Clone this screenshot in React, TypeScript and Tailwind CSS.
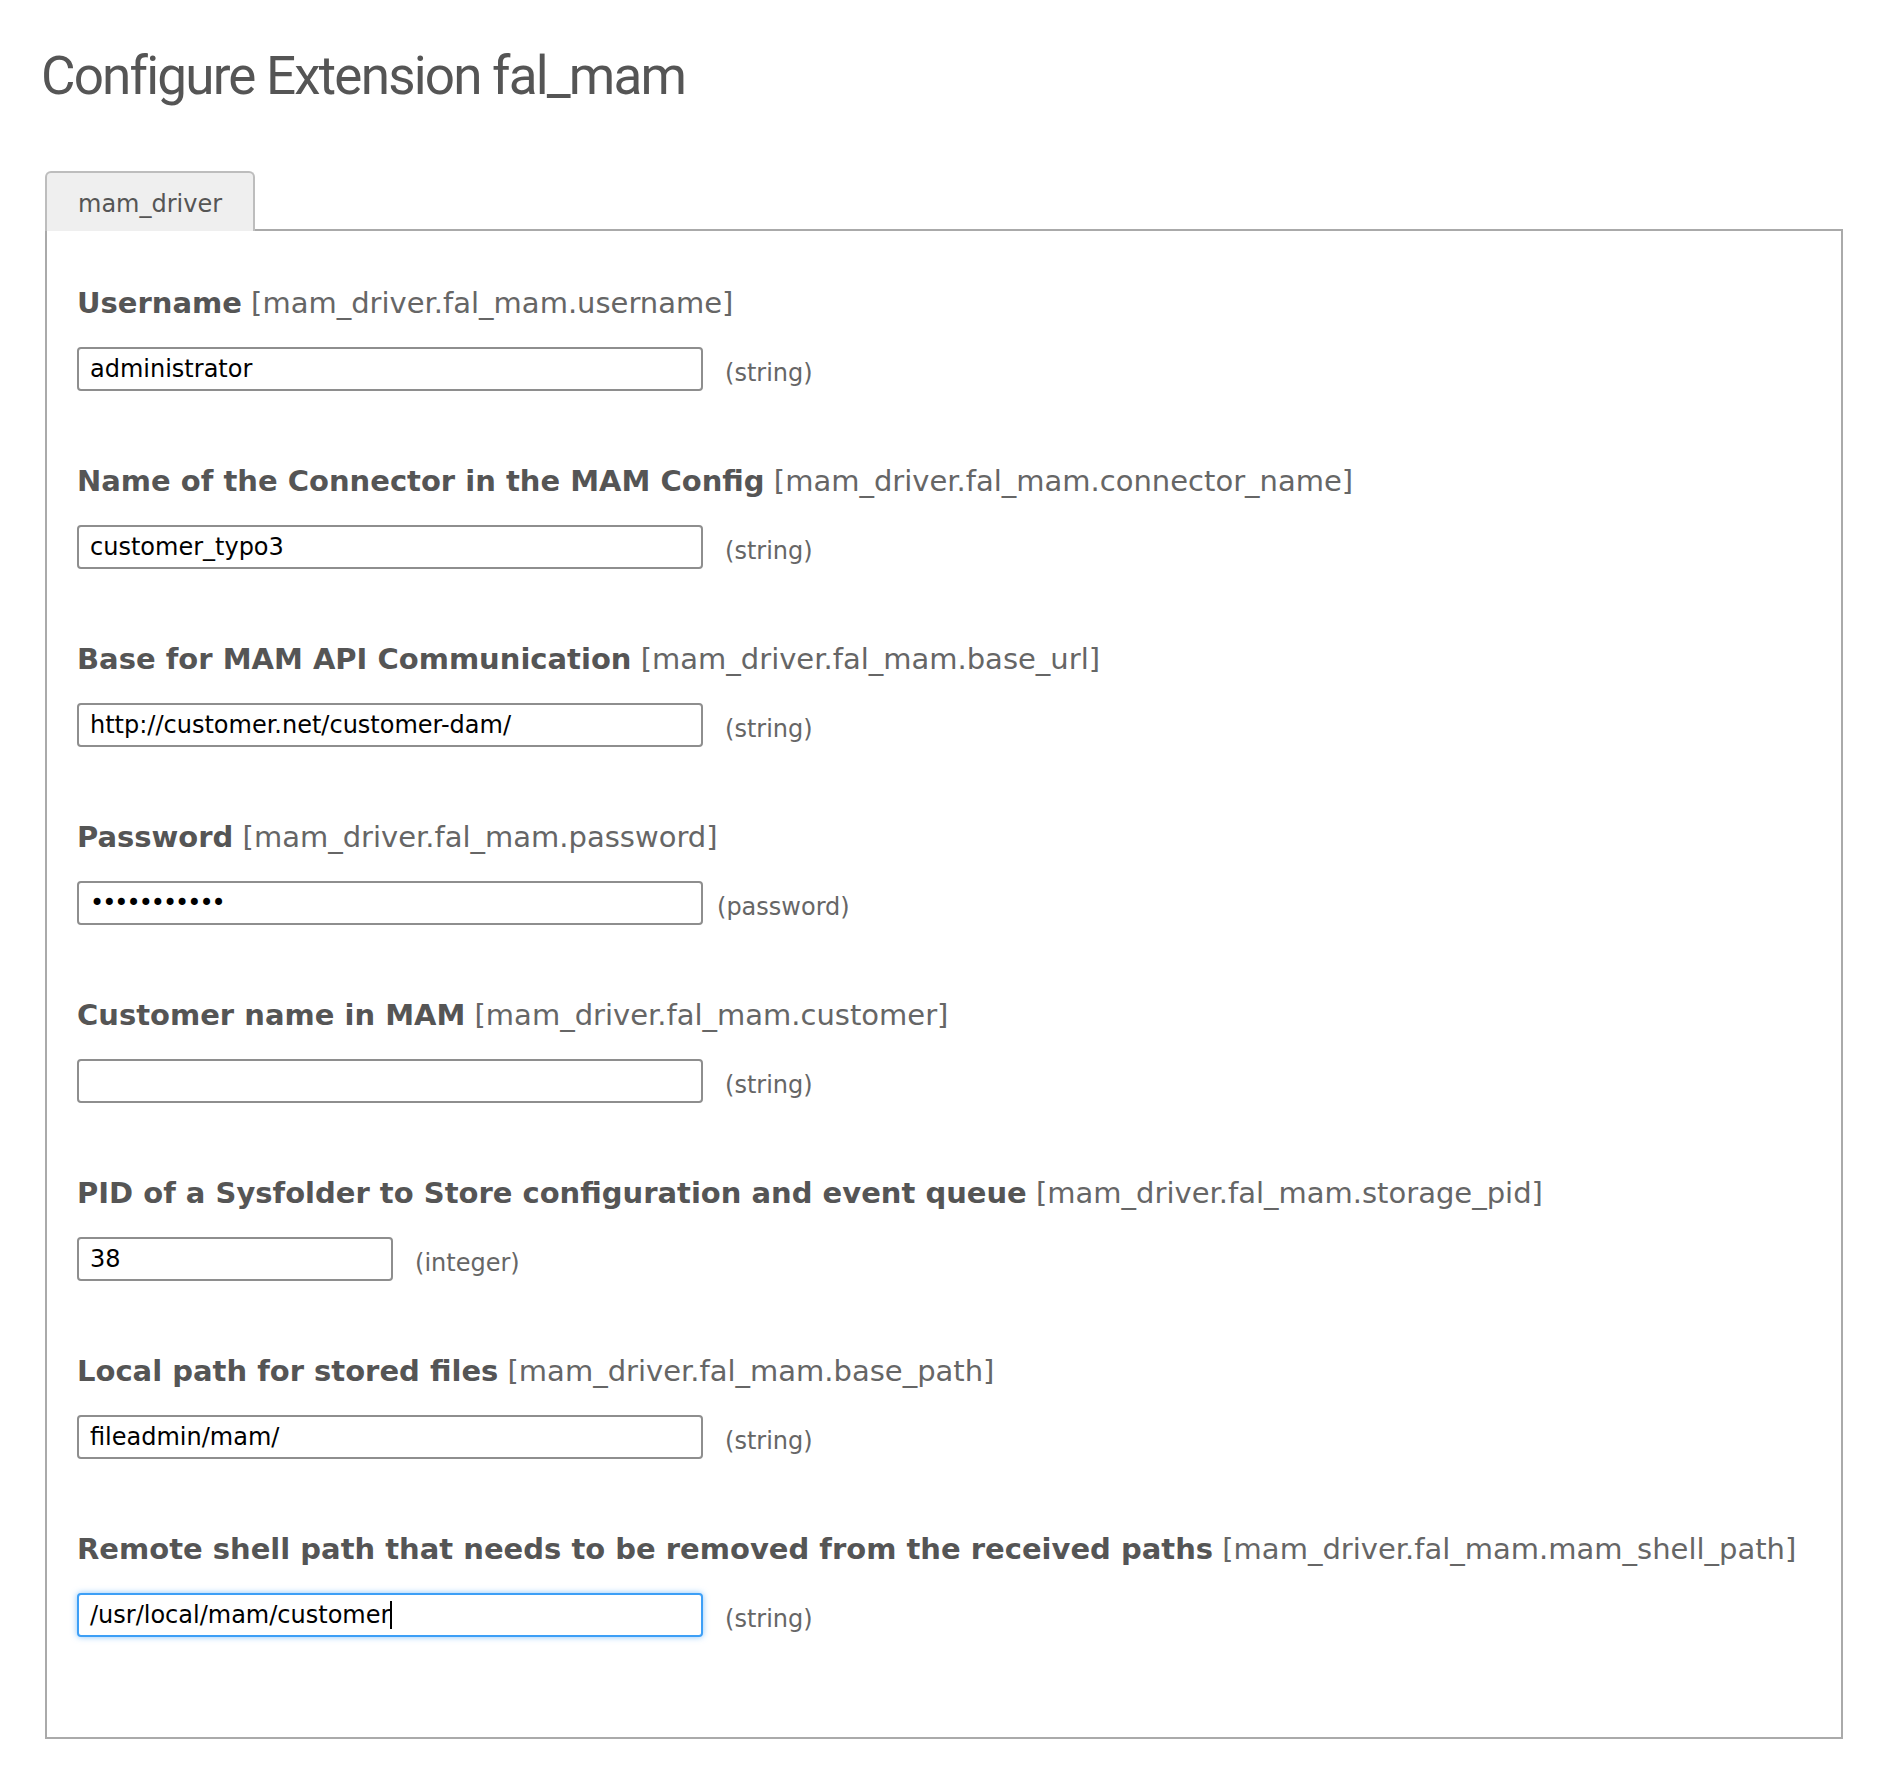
type Field = {
  label: string;
  path: string;
  value: string;
  kind: "string" | "password" | "integer";
  focused?: boolean;
};

const fields: Field[] = [
  { label: "Username", path: "mam_driver.fal_mam.username", value: "administrator", kind: "string" },
  {
    label: "Name of the Connector in the MAM Config",
    path: "mam_driver.fal_mam.connector_name",
    value: "customer_typo3",
    kind: "string",
  },
  {
    label: "Base for MAM API Communication",
    path: "mam_driver.fal_mam.base_url",
    value: "http://customer.net/customer-dam/",
    kind: "string",
  },
  { label: "Password", path: "mam_driver.fal_mam.password", value: "secretpass1", kind: "password" },
  { label: "Customer name in MAM", path: "mam_driver.fal_mam.customer", value: "", kind: "string" },
  {
    label: "PID of a Sysfolder to Store configuration and event queue",
    path: "mam_driver.fal_mam.storage_pid",
    value: "38",
    kind: "integer",
  },
  {
    label: "Local path for stored files",
    path: "mam_driver.fal_mam.base_path",
    value: "fileadmin/mam/",
    kind: "string",
  },
  {
    label: "Remote shell path that needs to be removed from the received paths",
    path: "mam_driver.fal_mam.mam_shell_path",
    value: "/usr/local/mam/customer",
    kind: "string",
    focused: true,
  },
];

function cn(...parts: string[]) {
  return parts.filter(Boolean).join(" ");
}

function ConfigRow({ field }: { field: Field }) {
  const width = field.kind === "integer" ? "w-[316px]" : "w-[626px]";
  const hintGap = field.kind === "password" ? "ml-[14px]" : "ml-[22px]";

  return (
    <div className="flex flex-col">
      <label className="text-[29px] leading-[32px] text-[#666]">
        <span className="font-bold text-[#555]">{field.label}</span> [{field.path}]
      </label>
      <div className="mt-[28px] flex items-center">
        {field.focused ? (
          // focused input, caret drawn after the value
          <div
            className={cn(
              width,
              "flex h-[44px] items-center rounded-[4px] border-2 border-[#3d9ff6] bg-white px-[11px] text-[24px] text-black shadow-[0_0_6px_rgba(61,159,246,0.6)]"
            )}
          >
            <span>{field.value}</span>
            <span className="h-[28px] w-[2px] bg-black" />
          </div>
        ) : (
          <input
            type={field.kind === "password" ? "password" : "text"}
            defaultValue={field.value}
            readOnly
            className={cn(
              width,
              "h-[44px] rounded-[4px] border-2 border-[#8e8e8e] bg-white px-[11px] text-[24px] text-black outline-none",
              field.kind === "password" ? "tracking-[-2px]" : ""
            )}
            style={{ fontFamily: "inherit" }}
          />
        )}
        <span className={cn(hintGap, "mt-[8px] text-[24px] text-[#666]")}>({field.kind})</span>
      </div>
    </div>
  );
}

export default function App() {
  return (
    <div className="min-h-[1770px] bg-white px-[45px] pt-[44px] font-['DejaVu_Sans',Verdana,sans-serif] text-[#555]">
      <h1 className="-ml-[4px] font-['Roboto',sans-serif] text-[53px] leading-[64px] font-normal tracking-[-1.8px] text-[#555]">
        Configure Extension fal_mam
      </h1>

      {/* Tabs */}
      <div className="mt-[63px] flex">
        <div className="flex h-[60px] w-[210px] items-center rounded-t-[6px] border-2 border-b-0 border-[#bdbdbd] bg-[#efefef] pl-[31px] pt-[4px] text-[24px] text-[#555]">
          mam_driver
        </div>
        <div className="flex-1 border-b-2 border-[#aaa]" />
      </div>

      {/* Panel */}
      <div className="flex flex-col gap-[74px] border-2 border-t-0 border-[#aaa] pb-[100px] pl-[30px] pt-[56px]">
        {fields.map((f) => (
          <ConfigRow key={f.path} field={f} />
        ))}
      </div>
    </div>
  );
}
